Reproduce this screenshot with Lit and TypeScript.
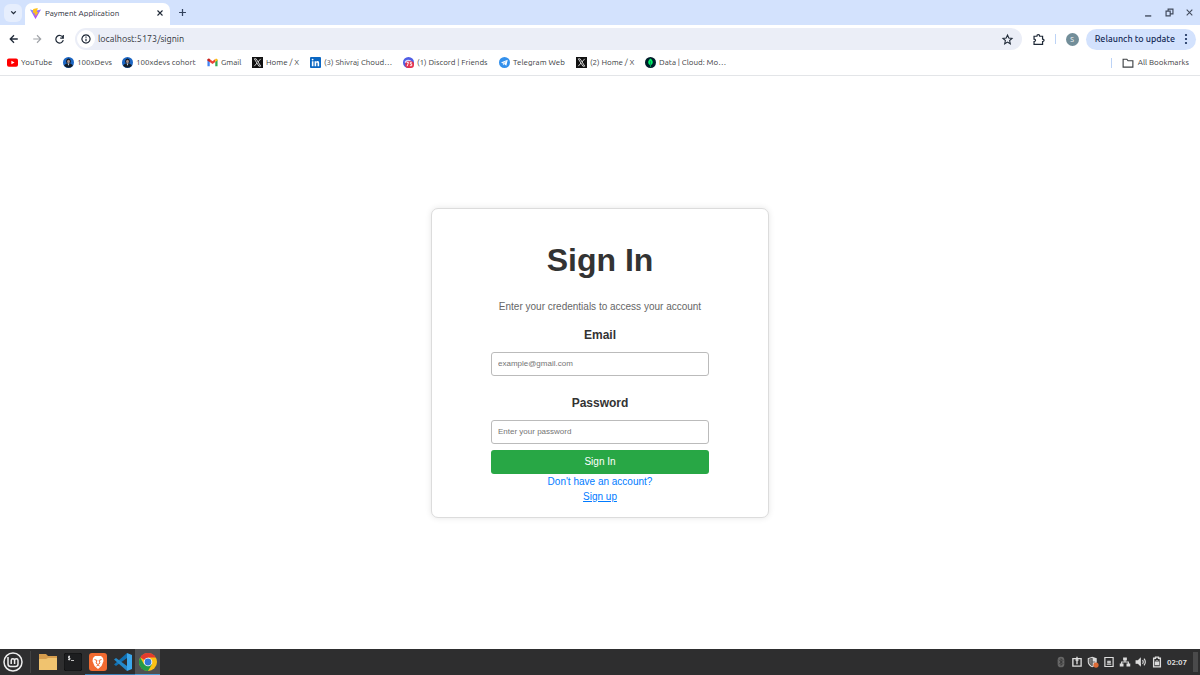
import { LitElement, html, css, svg } from "lit";
import { customElement } from "lit/decorators.js";

const stroke = (d: string, size = 12, width = 1.5, cls = "") => html`<svg class=${cls} width=${size} height=${size} viewBox="0 0 16 16" fill="none" stroke="currentColor" stroke-width=${width} aria-hidden="true"><path d=${d}/></svg>`;

const icon = (body: unknown, size = 11) => html`<svg width=${size} height=${size} viewBox="0 0 24 24" aria-hidden="true">${body}</svg>`;

const youtube = svg`<rect x="0" y="3" width="24" height="18" rx="4" fill="#f00"/><path d="M9.5 8l7 4-7 4z" fill="#fff"/>`;
const devs = svg`<circle cx="12" cy="12" r="12" fill="#1c66c4"/><path d="M7 9c0-8 10-8 10 0l-1 5H8z" fill="#10171f"/><ellipse cx="12" cy="10" rx="3" ry="4" fill="#a98f86"/><path d="M2.500 19c1-4 5-5 9.500-5s8.500 1 9.500 5a12 12 0 0 1-19 0z" fill="#111c28"/><path d="M10 14h4l-2 5z" fill="#dbe4ee"/>`;
const gmail = svg`<path d="M1 6v14h5V10z" fill="#4285f4"/><path d="M23 6v14h-5V10z" fill="#34a853"/><path d="M1 7c0-3 3-4 5-2.500l6 4.500 6-4.500V11l-6 4.500L6 11v0z" fill="#ea4335"/><path d="M1 6c0-2 3-3 5-1.500V11L1 7.500z" fill="#c5221f"/><path d="M18 4.500C20 3 23 4 23 6v1.500L18 11z" fill="#fbbc04"/>`;
const xLogo = svg`<rect width="24" height="24" fill="#111"/><path d="M5 4h4l10 16h-4zM19 4l-6 7M11 13l-6 7" fill="none" stroke="#fff" stroke-width="1.700"/>`;
const linkedin = svg`<rect width="24" height="24" rx="2" fill="#0a66c2"/><path d="M4 9h3.500v11H4zM10 9h3.300v1.600C15.500 7.500 20 8.500 20 13v7h-3.500v-6c0-3-3-3-3 0v6H10z" fill="#fff"/><circle cx="5.700" cy="5.600" r="2" fill="#fff"/>`;
const discord = svg`<circle cx="12" cy="12" r="12" fill="#4f5de4"/><path d="M4 9c5-4 10-4 15 0v4H4z" fill="#d8dbff"/><rect x="5" y="9" width="19" height="15" rx="7" fill="#e5314b"/><path d="M8 12h4l-3 8M19 12h-3v3h3v4h-4" fill="none" stroke="#fff" stroke-width="2"/>`;
const telegram = svg`<circle cx="12" cy="12" r="12" fill="#3390ec"/><path d="M4 12l15-6-3 13-5-4-2 3-1-5z" fill="#fff"/><path d="M8 13l9-5-6 7" fill="#a9d0f6"/>`;
const mongo = svg`<circle cx="12" cy="12" r="12" fill="#001e2b"/><path d="M12 3c6 5 7 10 .8 15v3h-1.600v-3C5 13 6 8 12 3z" fill="#00ed64"/><path d="M12 9v10" stroke="#00684a" stroke-width="1.200"/>`;

const bookmarks: [unknown, string, string][] = [
  [youtube, "YouTube", "w-56"], [devs, "100xDevs", "w-59"], [devs, "100xdevs cohort", "w-85"], [gmail, "Gmail", "w-45"],
  [xLogo, "Home / X", "w-58"], [linkedin, "(3) Shivraj Choud…", "w-93"], [discord, "(1) Discord | Friends", "w-96"],
  [telegram, "Telegram Web", "w-77"], [xLogo, "(2) Home / X", "w-69"], [mongo, "Data | Cloud: Mo…", "w-93"],
];

@customElement("browser-chrome")
export class BrowserChrome extends LitElement {
  static styles = css`
    :host { display: block; font-family: Ubuntu, "Noto Sans", sans-serif; color: #1f2937; }
    button { font: inherit; color: inherit; border: 0; background: none; padding: 0; display: grid; place-items: center; }
    svg { display: block; flex: none; }
    .tabs { display: flex; height: 25px; background: #d3e2fd; align-items: center; }
    .search { width: 18px; height: 18px; margin-left: 4px; border-radius: 6px; background: #e6eefd; }
    .tab { display: flex; align-items: center; align-self: flex-end; box-sizing: border-box; width: 145px; height: 22px; margin-left: 3px; padding: 0 6px 2px 5px; gap: 4px; background: #fff; border-radius: 7px 7px 0 0; font-size: 8px; }
    .title { flex: 1; white-space: nowrap; }
    .plus { margin-left: 7px; color: #33425c; }
    .window { display: flex; gap: 10px; margin-left: auto; padding-right: 6px; color: #414a5c; }
    .toolbar { display: flex; align-items: center; height: 28px; padding: 0 4px 0 8px; background: #fff; }
    .nav { display: flex; gap: 11px; margin-right: 10px; }
    .faded { color: #a0a3a8; }
    .omnibox { display: flex; align-items: center; flex: 1; height: 22px; border-radius: 11px; background: #ebeef7; padding: 0 8px 0 2px; }
    .info { width: 18px; height: 18px; border-radius: 9px; background: #fff; }
    .url { flex: 1; border: 0; outline: 0; background: none; color: #30343b; font: 9px Ubuntu, "Noto Sans", sans-serif; padding: 0 0 0 3px; }
    .actions { display: flex; align-items: center; margin-left: 10px; }
    .rule { width: 1px; height: 10px; background: #bcd3f6; margin: 0 10px; }
    .avatar { width: 13px; height: 13px; border-radius: 50%; background: #728e99; color: #fff; font-size: 7px; margin-right: 7px; }
    .relaunch { display: flex; align-items: center; height: 21px; border-radius: 11px; padding: 0 5px 0 9px; gap: 6px; background: #d3e2fd; color: #132a56; font-size: 9px; font-weight: 500; white-space: nowrap; }
    .marks { display: flex; align-items: center; height: 19px; padding: 0 9px 3px 7px; border-bottom: 1px solid #e3e5e8; font-size: 8px; color: #3c4043; }
    .mark { display: flex; align-items: center; gap: 3px; color: inherit; text-decoration: none; white-space: nowrap; }
    .w-45 { width: 45px; } .w-56 { width: 56px; } .w-58 { width: 58px; } .w-59 { width: 59px; } .w-69 { width: 69px; }
    .w-77 { width: 77px; } .w-85 { width: 85px; } .w-93 { width: 93px; } .w-96 { width: 96px; }
    .all { display: flex; align-items: center; gap: 4px; margin-left: auto; padding-right: 2px; }
    .all .rule { margin: 0 6px 0 0; }
  `;
  render() {
    return html`
      <div class="tabs">
        <button class="search" aria-label="Search tabs">${stroke("M4 6l4 4 4-4", 9, 2.4)}</button>
        <div class="tab">
          <svg width="11" height="11" viewBox="0 0 24 24" aria-hidden="true"><defs><linearGradient id="v" x2="0.600" y2="1"><stop stop-color="#7a9cff"/><stop offset="1" stop-color="#b43cff"/></linearGradient></defs><path d="M0 3l12 21L24 3l-12 3z" fill="url(#v)"/><path d="M17 0L7 2l-.5 9 4-.5-1 4 3-1-1 6 7-11-4 .5z" fill="#ffc21c"/></svg>
          <span class="title">Payment Application</span>
          <button aria-label="Close tab">${stroke("M3 3l10 10M13 3L3 13", 8, 2.2)}</button>
        </div>
        <button class="plus" aria-label="New tab">${stroke("M8 3v10M3 8h10", 11, 1.8)}</button>
        <div class="window">
          <button aria-label="Minimize">${stroke("M3 13h9", 11, 2)}</button>
          <button aria-label="Restore">${stroke("M3 6h6v7H3zM6 6V3h7v7h-4", 11, 1.7)}</button>
          <button aria-label="Close">${stroke("M3 3l10 10M13 3L3 13", 9, 1.9)}</button>
        </div>
      </div>
      <div class="toolbar">
        <div class="nav">
          <button aria-label="Back">${stroke("M13 8H3M8 3L3 8l5 5", 12, 1.7)}</button>
          <button class="faded" aria-label="Forward">${stroke("M3 8h10M8 3l5 5-5 5", 12, 1.5)}</button>
          <button aria-label="Reload">${stroke("M13 5A5.500 5.500 0 1 0 13.500 9M13.500 1.500V6H9", 11, 1.8)}</button>
        </div>
        <div class="omnibox">
          <button class="info" aria-label="Site information">${stroke("M8 2.500a5.500 5.500 0 1 0 .01 0M8 7.500v3.500M8 4.800v1.500", 12, 1.6)}</button>
          <input class="url" aria-label="Address" value="localhost:5173/signin">
          <button aria-label="Bookmark this page">${stroke("M8 2.500l1.600 3.700 4 .4-3 2.700.9 4L8 11.200l-3.500 2.100.9-4-3-2.700 4-.4z", 13, 1.3)}</button>
        </div>
        <div class="actions">
          <button aria-label="Extensions">${stroke("M2.500 4H6c0-2.500 3.500-2.500 3.500 0H13v3.500c2.500 0 2.500 3 0 3V14H2.500v-3.500c2.500 0 2.500-3 0-3z", 13, 1.5)}</button>
          <span class="rule"></span>
          <button class="avatar" aria-label="Profile">S</button>
          <button class="relaunch">Relaunch to update <svg width="10" height="12" viewBox="0 0 10 12" fill="currentColor" aria-hidden="true"><circle cx="5" cy="2" r="1.100"/><circle cx="5" cy="6" r="1.100"/><circle cx="5" cy="10" r="1.100"/></svg></button>
        </div>
      </div>
      <nav class="marks">
        ${bookmarks.map(([i, t, w]) => html`<a class="mark ${w}" href="#">${icon(i)}<span>${t}</span></a>`)}
        <button class="all"><span class="rule"></span>${stroke("M1.500 3h5l1.500 2h6.500v8.500h-13z", 12, 1.5)}All Bookmarks</button>
      </nav>`;
  }
}

@customElement("sign-in-card")
export class SignInCard extends LitElement {
  static styles = css`
    :host { display: block; width: 338px; font-family: "Liberation Sans", Arial, sans-serif; }
    .card { border: 1px solid #dcdcdc; border-radius: 7px; box-sizing: border-box; padding: 32px 59px 13px; box-shadow: 0 0 6px rgba(0,0,0,.1); text-align: center; background: #fff; }
    h1 { font-size: 32px; line-height: 38px; margin: 0; color: #333; }
    p { margin: 0; font-size: 10px; line-height: 15px; }
    .lead { margin: 20px 0 14px; color: #666; }
    label { display: block; font-size: 12px; line-height: 15px; font-weight: bold; color: #333; }
    .field { box-sizing: border-box; width: 100%; height: 24px; margin: 9px 0 0; padding: 0 6px; border: 1px solid #bbb; border-radius: 3px; font: 8px "Liberation Sans", Arial, sans-serif; background: #fff; }
    .field::placeholder { color: #757575; }
    .second { margin-top: 20px; }
    .submit { display: block; width: 100%; height: 24px; margin: 6px 0 0; border: 0; border-radius: 3px; background: #28a745; color: #fff; font: 10px "Liberation Sans", Arial, sans-serif; }
    .signup { color: #007bff; }
    a { color: inherit; }
  `;
  render() {
    return html`<form class="card">
      <h1>Sign In</h1>
      <p class="lead">Enter your credentials to access your account</p>
      <label for="email">Email</label>
      <input class="field" id="email" type="email" placeholder="example@gmail.com">
      <label class="second" for="password">Password</label>
      <input class="field" id="password" type="password" placeholder="Enter your password">
      <button class="submit" type="button">Sign In</button>
      <p class="signup">Don't have an account?<br><a href="#signup">Sign up</a></p>
    </form>`;
  }
}

@customElement("desktop-panel")
export class DesktopPanel extends LitElement {
  static styles = css`
    :host { display: flex; align-items: center; height: 26px; background: #2e2e2f; color: #eee; font: bold 8px Ubuntu, "Noto Sans", sans-serif; }
    button { display: grid; place-items: center; border: 0; padding: 0; background: none; color: inherit; }
    svg { display: block; }
    .menu { width: 26px; height: 26px; }
    .sep { width: 1px; height: 22px; margin: 0 4px; background: #434343; }
    .app { width: 25px; height: 26px; }
    .running { box-shadow: inset 0 -1px #3a7fb5; }
    .active { background: #505153; box-shadow: inset 0 -1px #4d9edb; }
    .tray { display: flex; align-items: center; gap: 4px; margin-left: auto; padding-right: 2px; color: #ddd; }
    .dim { color: #777; }
    .show { width: 5px; height: 20px; background: #4a4a4b; margin-left: 2px; }
  `;
  render() {
    return html`
      <button class="menu" aria-label="Menu"><svg width="20" height="20" viewBox="0 0 20 20" fill="none" stroke="#eee" aria-hidden="true"><circle cx="10" cy="10" r="9" stroke-width="1.500"/><path d="M5 5v7a2.500 2.500 0 0 0 2.500 2.500h5A2.500 2.500 0 0 0 15 12V8.500a1.700 1.700 0 0 0-3.400 0V12M11.600 8.500a1.700 1.700 0 0 0-3.400 0V12" stroke-width="1.500"/></svg></button>
      <span class="sep"></span>
      <button class="app" aria-label="Files"><svg width="18" height="18" viewBox="0 0 18 18" aria-hidden="true"><path d="M0 1h7l2 2h9v14H0z" fill="#d69d4d"/><path d="M0 6h7l2-1h9v12H0z" fill="#f0c36f"/></svg></button>
      <button class="app" aria-label="Terminal"><svg width="18" height="18" viewBox="0 0 18 18" aria-hidden="true"><rect width="18" height="18" rx="3" fill="#1d1e20" stroke="#111"/><path d="M6 3.500H4.500v1.500H6v1.500H4M5.200 2.500v5M7 7.500h3" stroke="#eee" fill="none" stroke-width=".8"/></svg></button>
      <button class="app running" aria-label="Brave"><svg width="18" height="18" viewBox="0 0 18 18" aria-hidden="true"><rect width="18" height="18" rx="3" fill="#f26a30"/><path d="M6 3h6l2 2 .5 3-2 5L9 16l-3.500-3-2-5L4 5z" fill="#fff"/><path d="M5.500 6.500L8 7.500 7 10l2 1.500 2-1.500-1-2.500 2.500-1M7.500 13L9 12l1.500 1" fill="none" stroke="#f26a30"/></svg></button>
      <button class="app running" aria-label="Code"><svg width="18" height="18" viewBox="0 0 18 18" aria-hidden="true"><path d="M0 11.500L13 0v5L2 13z" fill="#1070b3"/><path d="M0 6.500L2 5l11 8v5z" fill="#2489ca"/><path d="M13 0l5 2v14l-5 2z" fill="#3ba7ec"/></svg></button>
      <button class="app active" aria-label="Chrome"><svg width="18" height="18" viewBox="0 0 18 18" aria-hidden="true"><circle cx="9" cy="9" r="9" fill="#fbc116"/><path d="M9 9L1.200 4.500A9 9 0 0 1 16.800 4.500H9z" fill="#e33b2e"/><path d="M1.200 4.500A9 9 0 0 0 9 18l4-6.800L9 9 5 11.200z" fill="#249a48"/><circle cx="9" cy="9" r="4.300" fill="#fff"/><circle cx="9" cy="9" r="3.400" fill="#3279d8"/></svg></button>
      <div class="tray">
        <span class="dim"><svg width="12" height="12" viewBox="0 0 16 16" aria-hidden="true"><rect x="3.500" y="1" width="9" height="14" rx="4.500" fill="#666"/><path d="M5.500 5l5 5L8 12.500v-9L10.500 6l-5 5" fill="none" stroke="#2e2e2f"/></svg></span>
        ${stroke("M2.500 3.500h11v10h-11zM8 3v8M8 1v1.500M6 5.500h4", 12, 1.8)}
        <svg width="12" height="12" viewBox="0 0 16 16" aria-hidden="true"><path d="M7 1l6 2v5c0 3-3 6-6 7-3-1-6-4-6-7V3z" fill="#ddd"/><path d="M7 3v10c-2-1-4-3-4-5V4zM7 8h4" stroke="#444" fill="#777"/><circle cx="12" cy="12" r="3.500" fill="#dc6b36"/></svg>
        ${stroke("M2.500 2h11v12h-11zM6.500 9V7h3v2zM5 11h6", 12, 1.6)}
        <svg width="12" height="12" viewBox="0 0 16 16" fill="currentColor" aria-hidden="true"><path d="M5.500 2h5v4h-5zM1 10h5v4H1zM10 10h5v4h-5z"/><path d="M8 5v3M3.500 11V8h9v3" fill="none" stroke="currentColor" stroke-width="1.500"/></svg>
        <svg width="12" height="12" viewBox="0 0 16 16" fill="none" stroke="currentColor" stroke-width="1.500" aria-hidden="true"><path d="M1.500 6.500H4l3-3v9l-3-3H1.500z" fill="currentColor"/><path d="M10 5.500q2 2.500 0 5M12 3.500q3.500 4.500 0 9"/></svg>
        <svg width="12" height="12" viewBox="0 0 16 16" fill="none" stroke="currentColor" stroke-width="1.800" aria-hidden="true"><path d="M6 1.500h4v1.500h2.500v11.500h-9V3H6z"/><path d="M6 9h4v2.500H6z" fill="currentColor"/><path d="M6.500 8V6.500h3V8" stroke-width="1.200"/></svg>
        <time>02:07</time><button class="show" aria-label="Show desktop"></button>
      </div>`;
  }
}

@customElement("app-root")
export class AppRoot extends LitElement {
  static styles = css`
    :host { display: flex; flex-direction: column; min-height: 100vh; background: #fff; }
    main { flex: 1; display: grid; place-items: center; }
  `;
  render() {
    return html`<browser-chrome></browser-chrome><main><sign-in-card></sign-in-card></main><desktop-panel></desktop-panel>`;
  }
}
